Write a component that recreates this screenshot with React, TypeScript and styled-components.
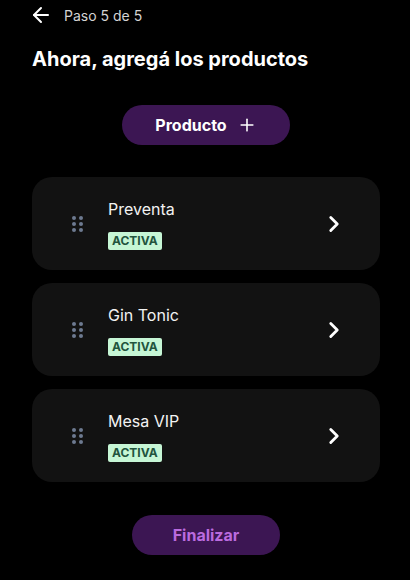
import styled, { createGlobalStyle } from "styled-components";
import { ArrowLeft, ChevronRight, Plus } from "lucide-react";

const GlobalStyle = createGlobalStyle`
  html, body {
    margin: 0;
    padding: 0;
    background: #000;
  }
  body {
    font-family: Inter, "Noto Sans", sans-serif;
    color: #fff;
  }
`;

const products = [
  { id: 1, name: "Preventa", active: true },
  { id: 2, name: "Gin Tonic", active: true },
  { id: 3, name: "Mesa VIP", active: true },
];

const DragHandle = () => (
  <Dots>
    {Array.from({ length: 6 }).map((_, i) => (
      <Dot key={i} />
    ))}
  </Dots>
);

const App = () => {
  return (
    <>
      <GlobalStyle />
      <Page>
        <Header>
          <BackBtn>
            <ArrowLeft size={24} strokeWidth={2} />
          </BackBtn>
          <StepText>Paso 5 de 5</StepText>
        </Header>
        <Title>Ahora, agregá los productos</Title>
        <Center>
          <AddBtn>
            Producto
            <Plus size={20} strokeWidth={1.9} />
          </AddBtn>
        </Center>
        <List>
          {products.map((p) => (
            <Card key={p.id}>
              <DragHandle />
              <Info>
                <Name>{p.name}</Name>
                {p.active && <Badge>ACTIVA</Badge>}
              </Info>
              <ChevronRight size={26} strokeWidth={2.6} />
            </Card>
          ))}
        </List>
        <Center>
          <FinishBtn>Finalizar</FinishBtn>
        </Center>
      </Page>
    </>
  );
};

export default App;

const Page = styled.div`
  width: 410px;
  height: 580px;
  padding: 0 30px 0 32px;
  box-sizing: border-box;
  display: flex;
  flex-direction: column;
`;

const Header = styled.div`
  height: 30px;
  display: flex;
  align-items: center;
  gap: 11px;
`;

const BackBtn = styled.button`
  background: none;
  border: none;
  color: #fff;
  padding: 0;
  margin-left: -3px;
  display: flex;
  align-items: center;
  cursor: pointer;
`;

const StepText = styled.span`
  font-size: 14px;
  color: #d4d4d4;
`;

const Title = styled.h1`
  margin: 17px 0 0;
  font-size: 20px;
  font-weight: 700;
  line-height: 24px;
`;

const Center = styled.div`
  display: flex;
  justify-content: center;
`;

const AddBtn = styled.button`
  margin-top: 34px;
  height: 40px;
  width: 168px;
  border-radius: 20px;
  border: none;
  background: #3c1653;
  color: #fff;
  font-family: inherit;
  font-size: 16px;
  font-weight: 700;
  display: flex;
  align-items: center;
  justify-content: center;
  gap: 10px;
  padding: 0;
  cursor: pointer;
`;

const List = styled.div`
  margin-top: 32px;
  display: flex;
  flex-direction: column;
  gap: 13px;
`;

const Card = styled.div`
  height: 93px;
  box-sizing: border-box;
  border-radius: 20px;
  background: #121212;
  display: flex;
  align-items: center;
  padding: 0 33px 0 40px;
`;

const Dots = styled.div`
  display: grid;
  grid-template-columns: repeat(2, 4px);
  grid-auto-rows: 4px;
  gap: 2px 3px;
  margin-right: 25px;
`;

const Dot = styled.span`
  width: 4px;
  height: 4px;
  border-radius: 50%;
  background: #6d7a90;
`;

const Info = styled.div`
  flex: 1;
  display: flex;
  flex-direction: column;
  align-items: flex-start;
  gap: 13px;
  padding-top: 2px;
`;

const Name = styled.span`
  font-size: 16px;
  line-height: 20px;
  color: #f2f2f2;
`;

const Badge = styled.span`
  background: #c6f6d5;
  color: #22543d;
  font-size: 12px;
  font-weight: 700;
  line-height: 18px;
  padding: 0 4px;
  border-radius: 2px;
`;

const FinishBtn = styled.button`
  margin-top: 33px;
  height: 40px;
  width: 148px;
  border-radius: 20px;
  border: none;
  background: #3c1653;
  color: #bb6bdf;
  font-family: inherit;
  font-size: 16px;
  font-weight: 700;
  cursor: pointer;
`;
